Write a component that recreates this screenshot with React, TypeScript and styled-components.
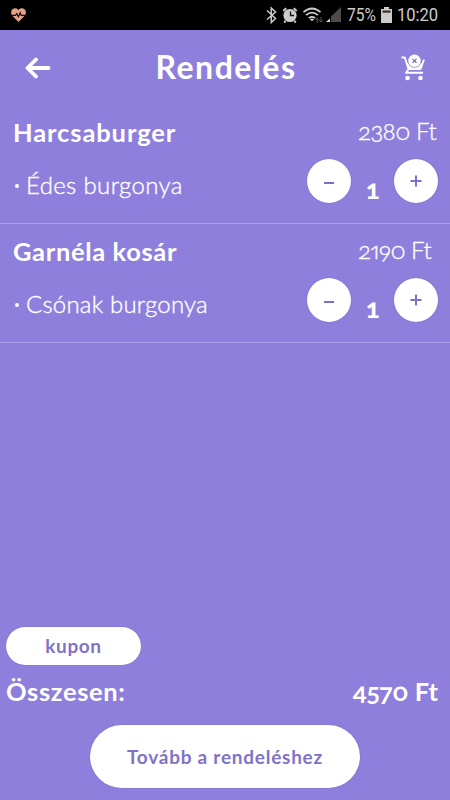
import React from "react";
import styled, { createGlobalStyle } from "styled-components";

const Global = createGlobalStyle`
  * { box-sizing: border-box; }
  html, body { margin: 0; padding: 0; background: #8f7fdd; }
  body { font-family: Lato, "Open Sans", sans-serif; color: #fff; }
  button { font: inherit; border: 0; padding: 0; margin: 0; }
`;

const Screen = styled.div`
  width: 450px;
  height: 800px;
  display: flex;
  flex-direction: column;
  overflow: hidden;
  background: #8f7fdd;
`;

const StatusBar = styled.div`
  height: 30px;
  flex: none;
  display: flex;
  align-items: center;
  background: #000;
  color: #ccc;
  padding: 0 12px 0 11px;
  font-family: Roboto, sans-serif;
`;

const StatusIcons = styled.div`
  margin-left: auto;
  display: flex;
  align-items: center;
`;

const StatusText = styled.span<{ $w: number; $ml: number; $scale: number }>`
  width: ${(p) => p.$w}px;
  margin-left: ${(p) => p.$ml}px;
  transform: scaleX(${(p) => p.$scale});
  transform-origin: left center;
  font-size: 19px;
  line-height: 30px;
  white-space: nowrap;
`;

const Header = styled.header`
  height: 75px;
  flex: none;
  display: grid;
  grid-template-columns: 75px 1fr 75px;
  align-items: center;
  justify-items: center;
`;

const IconButton = styled.button`
  display: flex;
  background: none;
  color: #fff;
`;

const Title = styled.h1`
  margin: 0;
  font-size: 32px;
  line-height: 40px;
  font-weight: 700;
  letter-spacing: 1.5px;
  margin-right: -2px;
  padding-bottom: 1px;
`;

const Item = styled.section`
  height: 119px;
  flex: none;
  padding-left: 13px;
  display: grid;
  grid-template-columns: 294px 143px;
  grid-template-rows: 54px 64px;
  border-bottom: 1px solid #aea2ea;
`;

const ItemName = styled.h2<{ $ls: number }>`
  margin: 0;
  padding-top: 11px;
  font-size: 25.5px;
  line-height: 32px;
  font-weight: 700;
  letter-spacing: ${(p) => p.$ls}px;
`;

const Price = styled.div`
  padding: 10px 0 0 51px;
  font-size: 24px;
  line-height: 32px;
  font-weight: 300;
  letter-spacing: -0.5px;
  white-space: nowrap;
  font-variant-numeric: oldstyle-nums proportional-nums;
  -webkit-text-stroke: 0.35px #fff;
`;

const Option = styled.div<{ $ls: number }>`
  display: flex;
  padding-top: 10px;
  font-size: 24px;
  line-height: 32px;
  font-weight: 300;
  letter-spacing: ${(p) => p.$ls}px;
  -webkit-text-stroke: 0.35px #fff;
`;

const Bullet = styled.i`
  width: 4px;
  height: 4px;
  margin: 15px 7px 0 2px;
  border-radius: 50%;
  background: #fff;
`;

const Stepper = styled.div`
  display: grid;
  grid-template-columns: 44px 42.5px 44px;
  height: 44px;
`;

const Round = styled.button`
  width: 44px;
  height: 44px;
  display: grid;
  place-items: center;
  border-radius: 50%;
  background: #fff;
  color: #7d6fcb;
  box-shadow: 0 0 1px rgba(60, 45, 130, 0.5);
`;

const Count = styled.span`
  padding: 15px 0 0 1px;
  text-align: center;
  font-size: 26px;
  line-height: 30px;
  font-weight: 900;
  font-variant-numeric: oldstyle-nums;
`;

const Footer = styled.footer`
  margin-top: auto;
  padding: 0 12px 12px 6px;
  display: flex;
  flex-direction: column;
`;

const Pill = styled.button<{ $big?: boolean }>`
  width: ${(p) => (p.$big ? 270 : 135)}px;
  height: ${(p) => (p.$big ? 63 : 38)}px;
  margin-left: ${(p) => (p.$big ? 84 : 0)}px;
  border-radius: 32px;
  background: #fff;
  color: #8172c9;
  font-size: 19px;
  line-height: 24px;
  font-weight: 700;
  letter-spacing: ${(p) => (p.$big ? 0.75 : 0.6)}px;
  box-shadow: 0 0 1px rgba(60, 45, 130, 0.6);
`;

const Total = styled.div`
  height: 60px;
  padding-top: 10px;
  display: flex;
  justify-content: space-between;
  font-size: 25.5px;
  line-height: 32px;
  font-weight: 700;
  font-variant-numeric: oldstyle-nums proportional-nums;
`;

const TotalLabel = styled.span`
  letter-spacing: 0.65px;
`;

const Heart = () => (
  <svg width="15" height="14" viewBox="0 0 15 14">
    <path d="M7.5 14 1.300 7.800C-.5 5.800-.2 2.700 1.500 1.200 3.300-.4 6-.1 7.500 1.900 9-.1 11.700-.4 13.500 1.200c1.700 1.500 2 4.600.2 6.600z" fill="#e3a186" />
    <path d="M0 7.300h4.500l1.300-1.600 1.600 3 1.700-4 1.100 2.600H15" fill="none" stroke="#15100e" strokeWidth="1.200" />
  </svg>
);

const BackArrow = () => (
  <svg width="26" height="22" viewBox="0 0 26 22" fill="none" stroke="currentColor" strokeWidth="3.800" strokeLinecap="round" strokeLinejoin="round">
    <path d="M11 2.500 2.500 11l8.500 8.500M3 11h20.500" />
  </svg>
);

const Cart = () => (
  <svg width="24" height="27" viewBox="0 0 24 27" fill="none" stroke="#fff" strokeWidth="1.900">
    <path d="M.5 3.500h3.300L7.500 15h12l3.500-9.500M8 14.500l-3 4.300h17" strokeLinejoin="round" />
    <path d="M5.500 9 7.500 15h12.300l2-6z" fill="#fff" stroke="none" />
    <circle cx="13.500" cy="6.800" r="7" fill="#8f7fdd" stroke="none" />
    <circle cx="13.500" cy="6.800" r="6.200" fill="#fff" stroke="none" />
    <path d="m11.500 4.800 4 4m0-4-4 4" stroke="#6f64a8" strokeWidth="1.200" />
    <circle cx="6.500" cy="24" r="2.300" fill="#fff" stroke="none" />
    <circle cx="19.500" cy="24" r="2.300" fill="#fff" stroke="none" />
  </svg>
);

const SystemIcons = () => (
  <svg width="76" height="20" viewBox="265 5 76 20" fill="none" stroke="#ccc">
    <path d="m267 10.500 8.500 8-4.200 4V8l4.200 4-8.500 7.500" strokeWidth="1.500" />
    <circle cx="290" cy="15.500" r="6.600" fill="#ccc" stroke="none" />
    <path d="m283.300 11 3-2.700m10.400 2.700-3-2.700m-8.200 12.700-1.300 1.500m10.200-1.500 1.300 1.500" strokeWidth="2" />
    <path d="M290.500 11.500v4h3.500" stroke="#111" strokeWidth="1.300" />
    <path d="M303.500 12.200q8.500-7.400 17 0M306 15.200q6-5 12 0M308.800 18.100q3.200-2.500 6.400 0" strokeWidth="1.700" />
    <path d="m309.800 19.200 2.200 2 2.200-2q-2.200-1.500-4.400 0" fill="#ccc" stroke="none" />
    <path d="M317.300 23v-5m-1.700 1.700 1.700-1.900 1.700 1.900M321 17v5m-1.700-1.700 1.700 1.900 1.700-1.900" stroke="#555" strokeWidth="1" />
    <path d="M341 7v15h-10v-5.500z" fill="#4c4c4c" stroke="none" />
    <path d="M330 18.500V22h-4z" fill="#ddd" stroke="none" />
  </svg>
);

const Battery = () => (
  <svg width="11" height="16" viewBox="0 0 11 16">
    <path d="M3 0h5v2h3v14H0V2h3z" fill="#ccc" />
    <path d="M1.500 3.500h8v2.200h-8z" fill="#333" />
  </svg>
);

const Minus = () => (
  <svg width="12" height="12" viewBox="0 0 12 12">
    <path d="M1 8h10" stroke="currentColor" strokeWidth="2" />
  </svg>
);

const Plus = () => (
  <svg width="12" height="12" viewBox="0 0 12 12">
    <path d="M.5 6h11M6 .5v11" stroke="currentColor" strokeWidth="2" />
  </svg>
);

const items = [
  { name: "Harcsaburger", nameSpacing: 0.9, option: "Édes burgonya", optionSpacing: 0.35, price: "2380 Ft" },
  { name: "Garnéla kosár", nameSpacing: 0.65, option: "Csónak burgonya", optionSpacing: 0.2, price: "2190 Ft" },
];

export default function App() {
  return (
    <Screen>
      <Global />
      <StatusBar>
        <Heart />
        <StatusIcons>
          <SystemIcons />
          <StatusText $w={34} $ml={6} $scale={0.82}>75%</StatusText>
          <Battery />
          <StatusText $w={41} $ml={5} $scale={0.87}>10:20</StatusText>
        </StatusIcons>
      </StatusBar>
      <Header>
        <IconButton aria-label="Vissza"><BackArrow /></IconButton>
        <Title>Rendelés</Title>
        <IconButton aria-label="Kosár ürítése"><Cart /></IconButton>
      </Header>
      {items.map((item) => (
        <Item key={item.name}>
          <ItemName $ls={item.nameSpacing}>{item.name}</ItemName>
          <Price>{item.price}</Price>
          <Option $ls={item.optionSpacing}><Bullet />{item.option}</Option>
          <Stepper>
            <Round aria-label="Kevesebb"><Minus /></Round>
            <Count>1</Count>
            <Round aria-label="Több"><Plus /></Round>
          </Stepper>
        </Item>
      ))}
      <Footer>
        <Pill>kupon</Pill>
        <Total><TotalLabel>Összesen:</TotalLabel><span>4570 Ft</span></Total>
        <Pill $big>Tovább a rendeléshez</Pill>
      </Footer>
    </Screen>
  );
}
